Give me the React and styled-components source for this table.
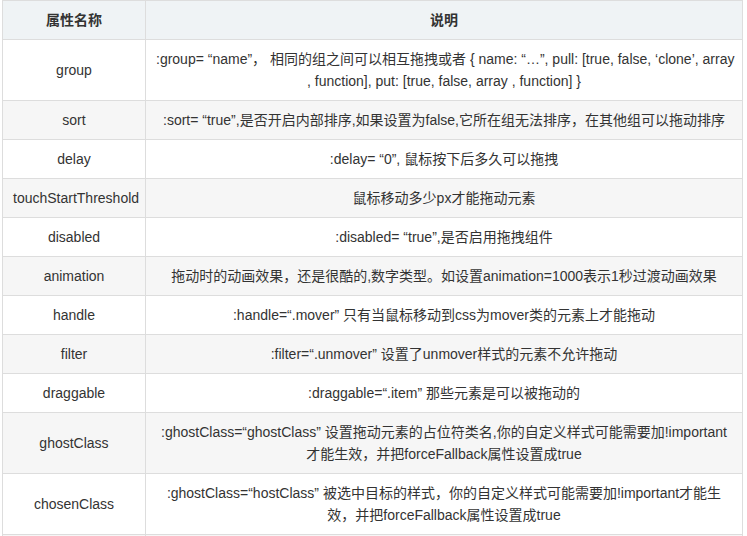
import React from "react";
import styled, { createGlobalStyle } from "styled-components";

const GlobalStyle = createGlobalStyle`
  html, body {
    margin: 0;
    padding: 0;
    background: #fff;
    overflow: hidden;
  }
  body {
    font-family: "Liberation Sans", "Noto Sans CJK SC", sans-serif;
    color: #333;
  }
`;

const Page = styled.div`
  padding: 0 0 0 2px;
  width: 747px;
  height: 536px;
  box-sizing: border-box;
`;

const Table = styled.table`
  width: 741px;
  table-layout: fixed;
  border-collapse: collapse;
  font-size: 14px;
  line-height: 22px;
`;

const HeadCell = styled.th`
  background: #eff3f5;
  border: 1px solid #ddd;
  padding: 8px 10px;
  font-weight: bold;
  text-align: center;
  color: #333;
`;

const Row = styled.tr`
  background: ${(p) => (p.$striped ? "#f6f6f6" : "#fff")};
`;

const Cell = styled.td`
  border: 1px solid #ddd;
  padding: 8px 10px;
  text-align: center;
  color: #333;
  white-space: nowrap;
  height: ${(p) => (p.$empty ? "22px" : "auto")};
`;

const rows = [
  {
    name: "group",
    desc: [
      ":group= “name”， 相同的组之间可以相互拖拽或者 { name: “…”, pull: [true, false, ‘clone’, array",
      ", function], put: [true, false, array , function] }",
    ],
  },
  {
    name: "sort",
    desc: [":sort= “true”,是否开启内部排序,如果设置为false,它所在组无法排序，在其他组可以拖动排序"],
  },
  { name: "delay", desc: [":delay= “0”, 鼠标按下后多久可以拖拽"] },
  { name: "touchStartThreshold", desc: ["鼠标移动多少px才能拖动元素"] },
  { name: "disabled", desc: [":disabled= “true”,是否启用拖拽组件"] },
  {
    name: "animation",
    desc: ["拖动时的动画效果，还是很酷的,数字类型。如设置animation=1000表示1秒过渡动画效果"],
  },
  { name: "handle", desc: [":handle=“.mover” 只有当鼠标移动到css为mover类的元素上才能拖动"] },
  { name: "filter", desc: [":filter=“.unmover” 设置了unmover样式的元素不允许拖动"] },
  { name: "draggable", desc: [":draggable=“.item” 那些元素是可以被拖动的"] },
  {
    name: "ghostClass",
    desc: [
      ":ghostClass=“ghostClass” 设置拖动元素的占位符类名,你的自定义样式可能需要加!important",
      "才能生效，并把forceFallback属性设置成true",
    ],
  },
  {
    name: "chosenClass",
    desc: [
      ":ghostClass=“hostClass” 被选中目标的样式，你的自定义样式可能需要加!important才能生",
      "效，并把forceFallback属性设置成true",
    ],
  },
];

export default function App() {
  return (
    <Page>
      <GlobalStyle />
      <Table>
        <colgroup>
          <col style={{ width: 143 }} />
          <col />
        </colgroup>
        <thead>
          <tr>
            <HeadCell>属性名称</HeadCell>
            <HeadCell>说明</HeadCell>
          </tr>
        </thead>
        <tbody>
          {rows.map((r, i) => (
            <Row key={r.name} $striped={i % 2 === 1}>
              <Cell>{r.name}</Cell>
              <Cell>
                {r.desc.map((line, j) => (
                  <React.Fragment key={j}>
                    {j > 0 && <br />}
                    {line}
                  </React.Fragment>
                ))}
              </Cell>
            </Row>
          ))}
          <Row $striped>
            <Cell $empty />
            <Cell $empty />
          </Row>
        </tbody>
      </Table>
    </Page>
  );
}
